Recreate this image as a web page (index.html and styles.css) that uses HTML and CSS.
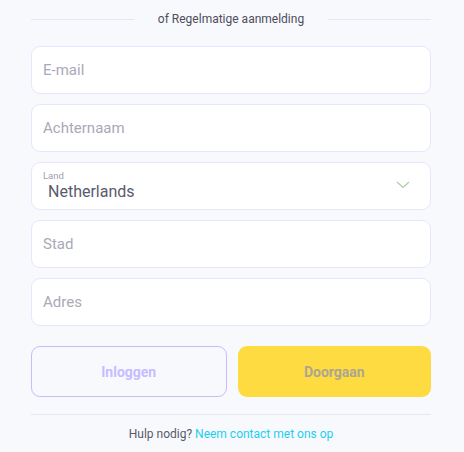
FILE: index.html
```html
<!DOCTYPE html>
<html>
<head>
<meta charset="utf-8">
<link rel="stylesheet" href="styles.css">
</head>
<body>
<div class="page">
  <div class="sep"><span class="line"></span><span class="sep-text">of Regelmatige aanmelding</span><span class="line"></span></div>
  <div class="fields">
    <div class="field"><span class="ph">E-mail</span></div>
    <div class="field"><span class="ph">Achternaam</span></div>
    <div class="field select">
      <div class="sel-body">
        <span class="label">Land</span>
        <span class="value">Netherlands</span>
      </div>
      <svg class="chev" width="14" height="8" viewBox="0 0 14 8"><path d="M1 1l6 5.5L13 1" fill="none" stroke="#a9cf9f" stroke-width="1.2"/></svg>
    </div>
    <div class="field"><span class="ph">Stad</span></div>
    <div class="field"><span class="ph">Adres</span></div>
  </div>
  <div class="buttons">
    <div class="btn btn-outline">Inloggen</div>
    <div class="btn btn-yellow">Doorgaan</div>
  </div>
  <div class="divider"></div>
  <div class="help">Hulp nodig? <span class="link">Neem contact met ons op</span></div>
</div>
</body>
</html>
```
FILE: styles.css
```css
html, body {
  margin: 0;
  padding: 0;
  background: #f8f9fd;
  font-family: Roboto, "Liberation Sans", sans-serif;
}
.page {
  width: 400px;
  margin-left: 31px;
  padding-top: 10px;
}
.sep {
  display: flex;
  align-items: center;
  gap: 24px;
  height: 18px;
}
.line {
  flex: 1;
  height: 1px;
  background: #e6e6f5;
}
.sep-text {
  font-size: 12px;
  color: #4d4d5c;
}
.fields {
  margin-top: 18px;
  display: flex;
  flex-direction: column;
  gap: 10px;
}
.field {
  height: 46px;
  background: #fff;
  border: 1px solid #e8e5ff;
  border-radius: 9px;
  display: flex;
  align-items: center;
  padding: 0 11px;
}
.ph {
  font-size: 15px;
  color: #a9a9b8;
}
.select {
  justify-content: space-between;
  padding-right: 20px;
}
.sel-body {
  display: flex;
  flex-direction: column;
  margin-top: -1px;
}
.label {
  font-size: 9.5px;
  color: #a0a0ae;
  line-height: 12px;
}
.value {
  font-size: 16px;
  color: #5a5a6e;
  line-height: 20px;
  padding-left: 5px;
}
.chev {
  margin-top: -2px;
}
.buttons {
  margin-top: 20px;
  display: flex;
  gap: 11px;
}
.btn {
  flex: 1;
  height: 51px;
  border-radius: 9px;
  display: flex;
  align-items: center;
  justify-content: center;
  font-size: 14px;
  font-weight: 700;
  box-sizing: border-box;
}
.btn-outline {
  border: 1px solid #c6bcff;
  color: #c7bcff;
}
.btn-yellow {
  background: #ffdb42;
  color: #aca690;
}
.divider {
  margin-top: 17px;
  height: 1px;
  background: #e6e6f5;
}
.help {
  margin-top: 12px;
  text-align: center;
  font-size: 12px;
  color: #5a5a6a;
}
.link {
  color: #1ccfef;
}
```
